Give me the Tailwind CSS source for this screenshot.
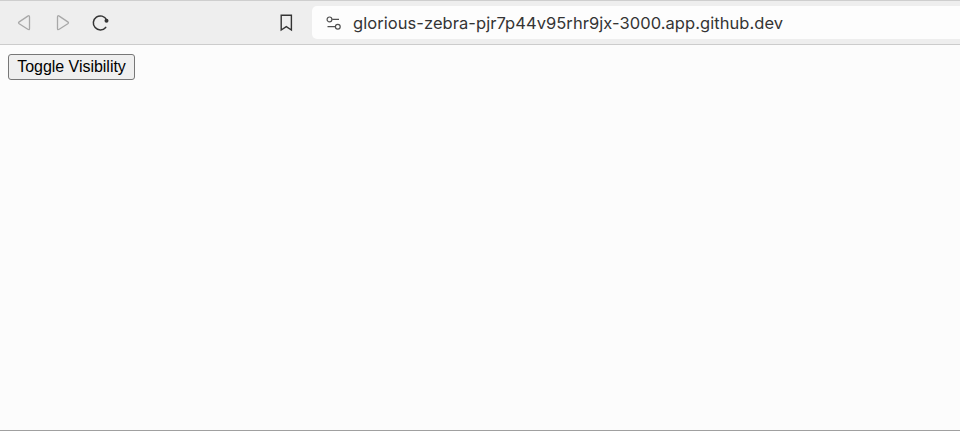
<!DOCTYPE html>
<html lang="en">
<head>
<meta charset="utf-8">
<title>Toggle Visibility</title>
<script src="https://cdn.jsdelivr.net/npm/@tailwindcss/browser@4"></script>
</head>
<body class="flex h-screen flex-col overflow-hidden border-b border-[#a0a0a0] bg-[#fcfcfc]">
<header class="flex h-[45px] shrink-0 items-center border-t border-b border-t-[#cecece] border-b-[#cccccc] bg-[#eeeeee]">
  <nav class="flex h-full w-[312px] items-center text-[#343434]">
    <svg class="ml-4 size-[18px] text-[#a8a8a8]" viewBox="0 0 18 18" fill="none" stroke="currentColor" stroke-width="1.3" stroke-linejoin="round"><path d="M13.500 3v11.400q0 2-1.700.9L3.200 9.700q-1.300-.9 0-1.800L11.800 2.100q1.700-1.100 1.700.9Z"/></svg>
    <svg class="ml-5 size-[18px] text-[#a8a8a8]" viewBox="0 0 18 18" fill="none" stroke="currentColor" stroke-width="1.3" stroke-linejoin="round"><path d="M3.500 3v11.400q0 2 1.700.9L13.800 9.700q1.300-.9 0-1.800L5.200 2.100q-1.700-1.100-1.700.9Z"/></svg>
    <svg class="ml-5 size-[18px]" viewBox="0 0 18 18" fill="none" stroke="currentColor" stroke-width="1.5" stroke-linecap="round"><path d="M13.700 13.400A7 7 0 1 1 14.600 5.800"/><circle cx="14.500" cy="6.800" r="2" fill="currentColor" stroke="none"/></svg>
    <svg class="ml-auto mr-4 size-[20px]" viewBox="0 0 20 20" fill="none" stroke="currentColor" stroke-width="1.400"><path d="M5.200 2.200h10.200v14.800l-5.100-3.300-5.100 3.300Z"/></svg>
  </nav>
  <div class="flex h-[33px] flex-1 items-center rounded-l-[5px] bg-[#fdfdfd] pl-[13px] text-[#343434]">
    <svg class="h-[16px] w-[18px]" viewBox="0 0 18 16" fill="none" stroke="#505050" stroke-width="1.200"><circle cx="4.500" cy="4.400" r="2.400"/><path d="M7.200 4.400h6.800M2.500 11.700h8"/><circle cx="12.800" cy="11.700" r="2.400"/></svg>
    <span class="ml-[10px] whitespace-nowrap font-['Inter',sans-serif] text-[16.5px] leading-5 tracking-[0.06px]">glorious-zebra-pjr7p44v95rhr9jx-3000.app.github.dev</span>
  </div>
</header>
<main class="flex-1 px-2 pt-[9px]">
  <button class="flex h-[26px] w-[127px] items-center justify-center rounded-[3px] border border-[#777777] bg-[#efefef] font-['Liberation_Sans',Arial,sans-serif] text-[16px] leading-5 tracking-[-0.03px] whitespace-nowrap text-black">Toggle Visibility</button>
</main>
</body>
</html>
